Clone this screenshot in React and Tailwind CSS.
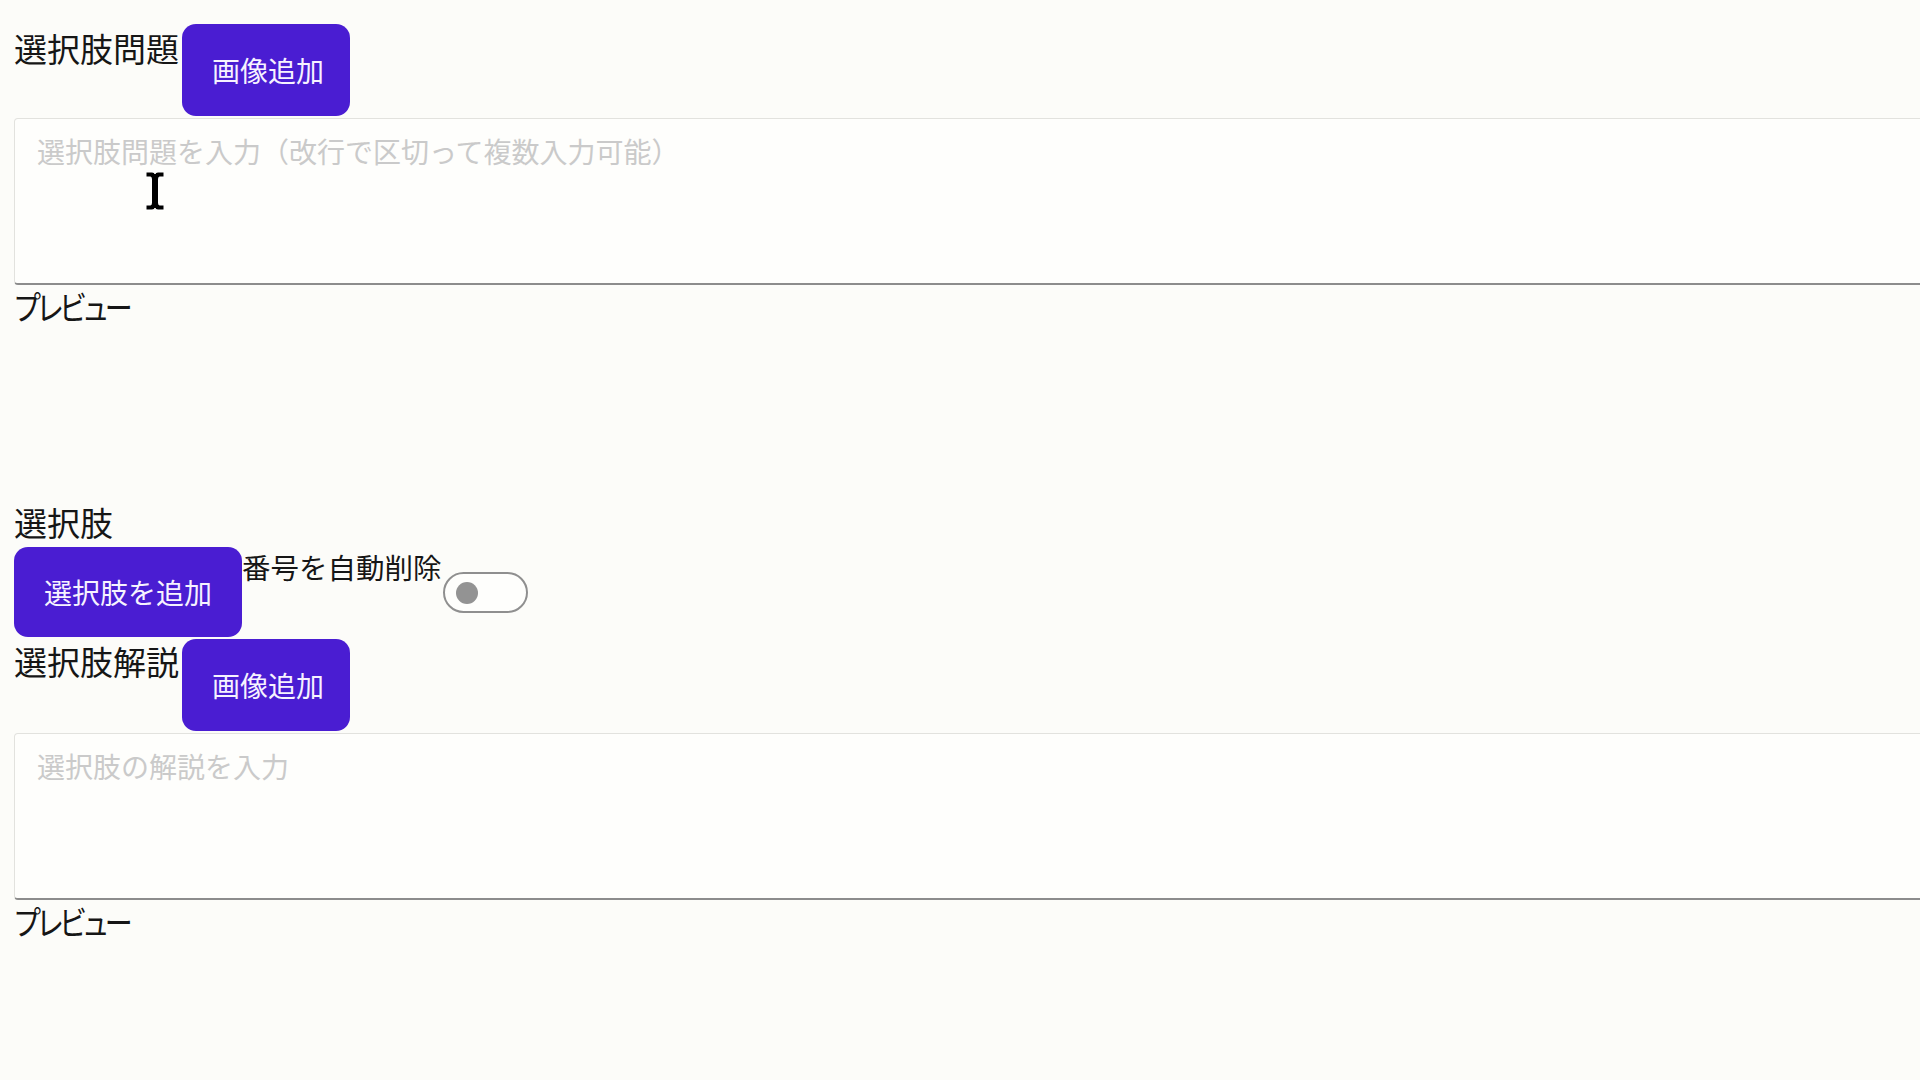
import React from 'react';

function ImageButton() {
  return (
    <button className="flex h-[92px] shrink-0 items-center whitespace-nowrap rounded-[14px] bg-[#4a1dd2] pl-[30px] pr-[26px] text-[28px] leading-[40px] text-[#f6f2ff]">
      画像追加
    </button>
  );
}

function IBeam() {
  return (
    <svg width="22" height="40" viewBox="0 0 22 40" className="pointer-events-none absolute left-[130px] top-[53px]">
      <path
        d="M2 1h6c1.5 0 2.5 1 3 2 .5-1 1.5-2 3-2h6v5h-4c-1 0-1.5.5-1.5 1.5v25c0 1 .5 1.5 1.5 1.5h4v5h-6c-1.5 0-2.5-1-3-2-.5 1-1.5 2-3 2H2v-5h4c1 0 1.5-.5 1.5-1.5v-25C7.5 6.5 7 6 6 6H2z"
        fill="#000"
        stroke="#fff"
        strokeWidth="1"
      />
    </svg>
  );
}

function Field({ placeholder, cursor }) {
  return (
    <div className="relative mt-[2px] w-[calc(100%+60px)]">
      <textarea
        placeholder={placeholder}
        className="block h-[167px] w-full resize-none rounded-[4px] border border-[#e2e2de] border-b-2 border-b-[#8c8c8c] bg-[#fefefc] px-[22px] pt-[12px] text-[28px] leading-[40px] text-[#111] outline-none placeholder:text-[#cacaca]"
      />
      {cursor && <IBeam />}
    </div>
  );
}

function Toggle() {
  return (
    <div className="ml-[1px] mt-[25px] flex h-[41px] w-[85px] shrink-0 items-center rounded-full border-2 border-[#8f8f8f] bg-[#fefefc] pl-[11px]">
      <div className="h-[22px] w-[22px] rounded-full bg-[#939393]" />
    </div>
  );
}

function Preview() {
  return (
    <>
      <div className="h-[46px]">
        <span className="-ml-[1px] -mt-[2px] inline-block origin-left scale-x-[0.85] align-top text-[33px] leading-[46px] tracking-[-6px]">プレビュー</span>
      </div>
      <div className="h-[167px]" />
    </>
  );
}

export default function App() {
  return (
    <div className="h-screen w-full overflow-hidden bg-[#fcfcf9] font-['Noto_Sans_CJK_JP',sans-serif] text-[#161616]">
      <div className="pl-[14px] pt-[24px]">
        <div className="flex items-start">
          <span className="pr-[3px] text-[33px] leading-[48px]">選択肢問題</span>
          <ImageButton />
        </div>
        <Field placeholder="選択肢問題を入力（改行で区切って複数入力可能）" cursor />
        <Preview />

        <div className="text-[33px] leading-[48px]">選択肢</div>
        <div className="mt-[1px] flex items-start">
          <button className="flex h-[90px] shrink-0 items-center rounded-[14px] bg-[#4a1dd2] px-[30px] text-[28px] leading-[40px] text-[#f6f2ff]">
            選択肢を追加
          </button>
          <span className="text-[28.5px] leading-[40px]">番号を自動削除</span>
          <Toggle />
        </div>

        <div className="mt-[2px] flex items-start">
          <span className="pr-[3px] text-[33px] leading-[44px]">選択肢解説</span>
          <ImageButton />
        </div>
        <Field placeholder="選択肢の解説を入力" />
        <Preview />
      </div>
    </div>
  );
}
